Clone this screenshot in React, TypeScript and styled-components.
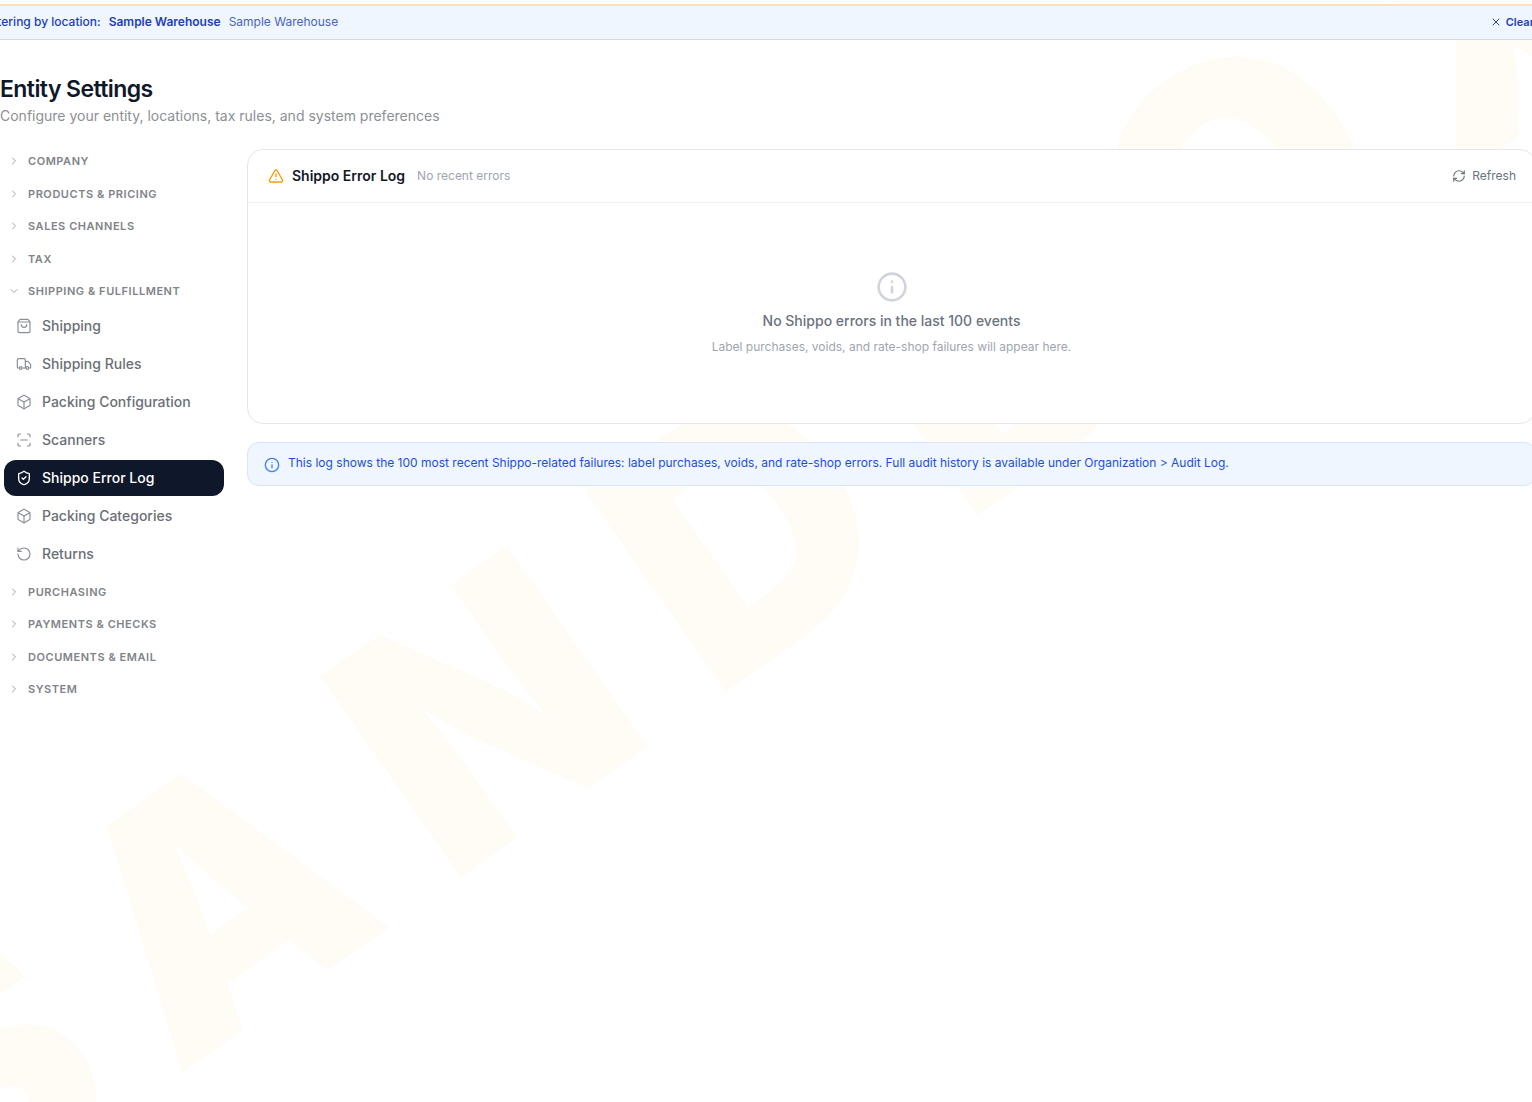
import React, { useState } from "react";
import styled, { createGlobalStyle } from "styled-components";
import {
  Box,
  ChevronDown,
  ChevronRight,
  Info,
  RefreshCw,
  RotateCcw,
  ScanLine,
  ShieldCheck,
  ShoppingBag,
  TriangleAlert,
  Truck,
  X,
  type LucideIcon,
} from "lucide-react";

const GlobalStyle = createGlobalStyle`
  *, *::before, *::after { box-sizing: border-box; }
  body {
    margin: 0;
    background: #ffffff;
    color: #0f172a;
    font-family: Inter, "Liberation Sans", sans-serif;
    font-size: 14px;
    line-height: 20px;
  }
  h1, h2, p { margin: 0; }
  button { font-family: inherit; border: 0; background: none; cursor: pointer; }
`;

const Shell = styled.div`
  position: relative;
  min-height: 100vh;
  padding-top: 4px;
  overflow: hidden;
`;

const Watermark = styled.div`
  position: absolute;
  inset: 0;
  display: flex;
  align-items: center;
  justify-content: center;
  pointer-events: none;
  user-select: none;

  span {
    padding: 0 0 60px 34px;
    color: #fffcf5;
    font-size: 22vw;
    font-weight: 900;
    line-height: 1;
    letter-spacing: 0.19em;
    white-space: nowrap;
    transform: rotate(-35deg);
  }
`;

const Page = styled.div`
  position: relative;
`;

const LocationBar = styled.div`
  display: flex;
  align-items: center;
  justify-content: space-between;
  height: 36px;
  margin: 0 -24px 0 -40px;
  padding: 0 22px 2px 24px;
  border-top: 2px solid #fde0bd;
  border-bottom: 1px solid #c9ddf5;
  background: #eff6ff;
  color: #1e40af;
  font-size: 12px;
  line-height: 16px;
`;

const LocationText = styled.div`
  display: flex;
  gap: 8px;
  font-weight: 500;
  white-space: nowrap;

  strong { font-weight: 600; }
`;

const LocationNote = styled.span`
  color: #4a64b8;
  font-weight: 400;
`;

const ClearButton = styled.button`
  display: flex;
  align-items: center;
  gap: 4px;
  padding: 0;
  color: #1e40af;
  font-size: 11px;
  font-weight: 600;
  line-height: 16px;
`;

const Heading = styled.header`
  padding-top: 33px;

  h1 {
    font-size: 23px;
    font-weight: 600;
    line-height: 32px;
    letter-spacing: -0.025em;
  }

  p {
    margin-top: 1px;
    color: #8b8f96;
  }
`;

const Layout = styled.div`
  display: grid;
  grid-template-columns: 224px minmax(0, 1fr);
  gap: 23px;
  align-items: start;
  margin: 19px -4px 0 0;
`;

const Sidebar = styled.nav`
  padding: 0 0 0 4px;
`;

const GroupButton = styled.button`
  display: flex;
  align-items: center;
  gap: 8px;
  width: 100%;
  padding: 8px 4px;
  color: #808389;
  font-size: 11px;
  font-weight: 600;
  line-height: 1.5;
  letter-spacing: 0.05em;
  text-align: left;
  text-transform: uppercase;

  svg { color: #a1a5ab; }
`;

const GroupItems = styled.div`
  display: grid;
  gap: 2px;
  padding-bottom: 4px;
`;

const NavItem = styled.a<{ $active: boolean }>`
  display: flex;
  align-items: center;
  gap: 10px;
  height: 36px;
  padding: 0 12px;
  border-radius: 12px;
  background: ${(p) => (p.$active ? "#0f172a" : "transparent")};
  color: ${(p) => (p.$active ? "#ffffff" : "#6b6f76")};
  font-weight: 500;
  text-decoration: none;

  svg { color: ${(p) => (p.$active ? "#ffffff" : "#8a8e95")}; }
`;

const Content = styled.main`
  display: grid;
  gap: 18px;
  padding-top: 4px;
`;

const Card = styled.section`
  border: 1px solid #e5e7eb;
  border-radius: 16px;
  background: #ffffff;
`;

const CardHeader = styled.div`
  display: flex;
  align-items: center;
  justify-content: space-between;
  height: 53px;
  padding: 0 19px 0 20px;
  border-bottom: 1px solid #f0f1f3;
`;

const CardTitle = styled.div`
  display: flex;
  align-items: center;
  gap: 8px;

  svg { color: #f59e0b; }

  h2 {
    color: #111827;
    font-size: 14px;
    font-weight: 600;
    line-height: 20px;
  }

  span {
    margin-left: 4px;
    color: #a0a5b0;
    font-size: 12px;
  }
`;

const RefreshButton = styled.button`
  display: flex;
  align-items: center;
  gap: 6px;
  padding: 0;
  color: #6b7280;
  font-size: 12px;
  line-height: 16px;
`;

const EmptyState = styled.div`
  display: flex;
  flex-direction: column;
  align-items: center;
  padding: 68px 24px 66px;
  color: #a0a5b0;
  font-size: 12px;

  svg { color: #d1d5db; }

  p:first-of-type {
    margin: 8px 0 6px;
    color: #6b7280;
    font-size: 14px;
    font-weight: 500;
  }
`;

const Notice = styled.aside`
  display: flex;
  align-items: flex-start;
  gap: 8px;
  padding: 10px 16px 12px;
  border: 1px solid #d5e5fa;
  border-radius: 12px;
  background: #eff6ff;
  color: #1d4ed8;
  font-size: 12px;

  svg {
    flex: none;
    margin-top: 4px;
    color: #3b82f6;
  }
`;

type Item = { label: string; icon: LucideIcon };
type Group = { label: string; items: Item[] };

const groups: Group[] = [
  { label: "Company", items: [] },
  { label: "Products & Pricing", items: [] },
  { label: "Sales Channels", items: [] },
  { label: "Tax", items: [] },
  {
    label: "Shipping & Fulfillment",
    items: [
      { label: "Shipping", icon: ShoppingBag },
      { label: "Shipping Rules", icon: Truck },
      { label: "Packing Configuration", icon: Box },
      { label: "Scanners", icon: ScanLine },
      { label: "Shippo Error Log", icon: ShieldCheck },
      { label: "Packing Categories", icon: Box },
      { label: "Returns", icon: RotateCcw },
    ],
  },
  { label: "Purchasing", items: [] },
  { label: "Payments & Checks", items: [] },
  { label: "Documents & Email", items: [] },
  { label: "System", items: [] },
];

export default function App() {
  const [openGroup, setOpenGroup] = useState("Shipping & Fulfillment");
  const [active, setActive] = useState("Shippo Error Log");

  return (
    <Shell>
      <GlobalStyle />
      <Watermark aria-hidden="true">
        <span>SANDBOX</span>
      </Watermark>
      <Page>
        <LocationBar>
          <LocationText>
            <span>Filtering by location:</span>
            <strong>Sample Warehouse</strong>
            <LocationNote>Sample Warehouse</LocationNote>
          </LocationText>
          <ClearButton type="button">
            <X size={12} />
            Clear
          </ClearButton>
        </LocationBar>

        <Heading>
          <h1>Entity Settings</h1>
          <p>Configure your entity, locations, tax rules, and system preferences</p>
        </Heading>

        <Layout>
          <Sidebar aria-label="Settings">
            {groups.map((group) => {
              const open = group.label === openGroup;
              const Chevron = open ? ChevronDown : ChevronRight;
              return (
                <div key={group.label}>
                  <GroupButton
                    type="button"
                    aria-expanded={open}
                    onClick={() => setOpenGroup(open ? "" : group.label)}
                  >
                    <Chevron size={12} />
                    {group.label}
                  </GroupButton>
                  {open && (
                    <GroupItems>
                      {group.items.map(({ label, icon: Icon }) => (
                        <NavItem
                          key={label}
                          href="#"
                          $active={label === active}
                          aria-current={label === active ? "page" : undefined}
                          onClick={() => setActive(label)}
                        >
                          <Icon size={16} strokeWidth={label === active ? 2 : 1.75} />
                          {label}
                        </NavItem>
                      ))}
                    </GroupItems>
                  )}
                </div>
              );
            })}
          </Sidebar>

          <Content>
            <Card>
              <CardHeader>
                <CardTitle>
                  <TriangleAlert size={16} />
                  <h2>Shippo Error Log</h2>
                  <span>No recent errors</span>
                </CardTitle>
                <RefreshButton type="button">
                  <RefreshCw size={14} />
                  Refresh
                </RefreshButton>
              </CardHeader>
              <EmptyState>
                <Info size={32} />
                <p>No Shippo errors in the last 100 events</p>
                <p>Label purchases, voids, and rate-shop failures will appear here.</p>
              </EmptyState>
            </Card>

            <Notice>
              <Info size={16} />
              <p>
                This log shows the 100 most recent Shippo-related failures: label purchases, voids,
                and rate-shop errors. Full audit history is available under Organization &gt; Audit
                Log.
              </p>
            </Notice>
          </Content>
        </Layout>
      </Page>
    </Shell>
  );
}
